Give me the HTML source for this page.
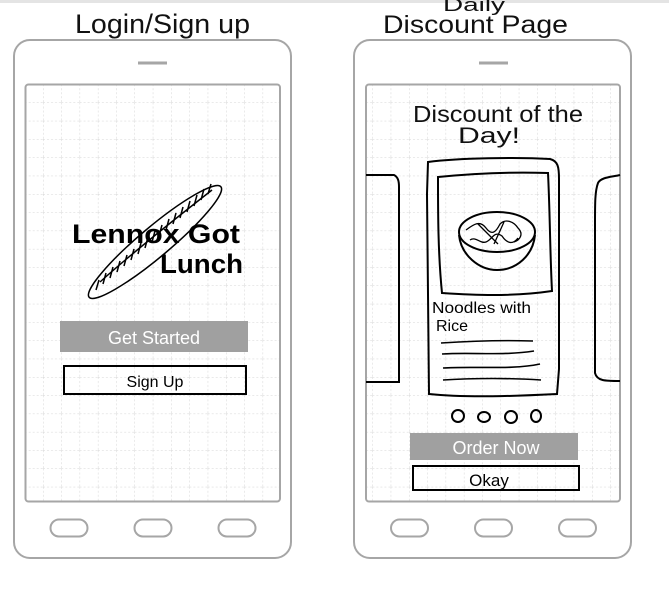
<!DOCTYPE html>
<html><head><meta charset="utf-8"><style>
html,body{margin:0;padding:0;background:#fff;}
svg{display:block}
text{font-family:"Liberation Sans",sans-serif;}
</style></head><body>
<svg width="669" height="590" viewBox="0 0 669 590" xmlns="http://www.w3.org/2000/svg">
<defs>
<pattern id="g" x="6.4" y="11" width="18.3" height="18.3" patternUnits="userSpaceOnUse">
<line x1="0" y1="0" x2="0" y2="18.3" stroke="#d4d4d4" stroke-width="1" stroke-dasharray="2,2"/>
<line x1="0" y1="0" x2="18.3" y2="0" stroke="#d4d4d4" stroke-width="1" stroke-dasharray="2,2"/>
</pattern>
</defs>
<rect x="0" y="0" width="669" height="3" fill="#e4e4e4"/>
<g fill="none" stroke="#a6a6a6" stroke-width="2">
<rect x="14" y="40" width="277" height="518" rx="16"/>
<rect x="25.5" y="84.5" width="254.5" height="417" rx="3" fill="url(#g)"/>
<rect x="50.5" y="519.5" width="37" height="17" rx="8.5"/>
<rect x="134.5" y="519.5" width="37" height="17" rx="8.5"/>
<rect x="218.5" y="519.5" width="37" height="17" rx="8.5"/>
<line x1="138" y1="63" x2="167" y2="63" stroke-width="3"/>
<rect x="354" y="40" width="277" height="518" rx="16"/>
<rect x="366" y="84.5" width="254" height="417" rx="3" fill="url(#g)"/>
<rect x="391" y="519.5" width="37" height="17" rx="8.5"/>
<rect x="475" y="519.5" width="37" height="17" rx="8.5"/>
<rect x="559" y="519.5" width="37" height="17" rx="8.5"/>
<line x1="479" y1="63" x2="508" y2="63" stroke-width="3"/>
</g>
<text x="75" y="33" font-size="27" fill="#111" textLength="175" lengthAdjust="spacingAndGlyphs">Login/Sign up</text>
<text x="443" y="11" font-size="18" fill="#111" textLength="62" lengthAdjust="spacingAndGlyphs">Daily</text>
<text x="383" y="33" font-size="25" fill="#111" textLength="185" lengthAdjust="spacingAndGlyphs">Discount Page</text>
<g fill="none" stroke="#000" stroke-width="1.5">
<ellipse cx="155" cy="242" rx="86" ry="15" transform="rotate(-40 155 242)"/>
<path d="M100 282 C130 255,180 215,212 190"/>
<path d="M96 290l3-10M103 284l3-11M110 278l3-11M117 272l3-11M124 266l3-11M131 260l3-11M138 254l3-11M145 248l3-11M152 242l3-11M159 236l3-11M166 230l3-11M173 224l3-11M180 218l3-11M187 212l3-11M194 206l3-11M201 200l3-11M208 194l3-10"/>
</g>
<text x="72" y="243" font-size="27" font-weight="bold" fill="#000" textLength="168" lengthAdjust="spacingAndGlyphs">Lennox Got</text>
<text x="160" y="273" font-size="27" font-weight="bold" fill="#000" textLength="83" lengthAdjust="spacingAndGlyphs">Lunch</text>
<rect x="60" y="321" width="188" height="31" fill="#a0a0a0"/>
<text x="154" y="344" font-size="18" fill="#fff" text-anchor="middle">Get Started</text>
<rect x="64" y="366" width="182" height="28" fill="none" stroke="#000" stroke-width="2"/>
<text x="155" y="387" font-size="16" fill="#000" text-anchor="middle">Sign  Up</text>
<text x="413" y="122" font-size="23" fill="#111" textLength="170" lengthAdjust="spacingAndGlyphs">Discount of the</text>
<text x="458" y="143" font-size="22" fill="#111" textLength="62" lengthAdjust="spacingAndGlyphs">Day!</text>
<g fill="none" stroke="#000" stroke-width="2">
<path d="M366 175h28c4 2 5 6 5 12v195h-33"/>
<path d="M620 175c-8 2-19 2-22 8c-3 8-3 20-3 40v150c2 8 10 8 25 8"/>
<path d="M428 162c30-4 90-5 122-3c8 2 9 8 9 20v190l-2 25c-40 2-90 4-128 0l-2-200z"/>
<path d="M438 177c40-4 80-5 110-4c2 40 2 80 4 118c-40 6-80 4-110 2c-4-40-4-80-4-116z"/>
<ellipse cx="497" cy="232" rx="38" ry="20"/>
<path d="M459 235c2 20 20 35 38 35c20 0 36-15 38-35"/>
<path d="M466 230c8-6 14-10 20-2c6 8 10 4 14-4c6-6 14-2 18 4c6 6 2 12-4 14M470 240c6-4 10 4 16 2c6-2 8-12 16-6c4 6 10 10 16 2M478 224l20 20M504 222l-10 22" stroke-width="1.3"/>
<path d="M441 343c30-2 60-3 92-2M442 354c30-2 60 2 92-3M443 368c30-2 70 2 97-4M443 380c30-2 70-2 98 0" stroke-width="1.6"/>
<ellipse cx="458" cy="416" rx="6" ry="6"/>
<ellipse cx="484" cy="417" rx="6" ry="5"/>
<ellipse cx="511" cy="417" rx="6" ry="6"/>
<ellipse cx="536" cy="416" rx="5" ry="6"/>
</g>
<text x="432" y="313" font-size="16" fill="#000" textLength="99" lengthAdjust="spacingAndGlyphs">Noodles with</text>
<text x="436" y="331" font-size="16" fill="#000">Rice</text>
<rect x="410" y="433" width="168" height="27" fill="#a0a0a0"/>
<text x="496" y="454" font-size="18" fill="#fff" text-anchor="middle">Order Now</text>
<rect x="413" y="466" width="166" height="24" fill="none" stroke="#000" stroke-width="2"/>
<text x="489" y="486" font-size="17" fill="#000" text-anchor="middle">Okay</text>
</svg>
</body></html>
